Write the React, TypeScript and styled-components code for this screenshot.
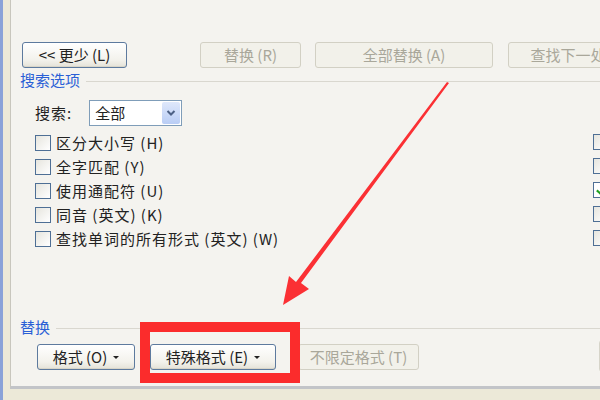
import React from "react";
import styled, { createGlobalStyle } from "styled-components";

const Global = createGlobalStyle`
  html, body { margin: 0; padding: 0; width: 600px; height: 400px; overflow: hidden; background: #ece9d8; }
  * { box-sizing: border-box; }
`;

const Frame = styled.div`
  position: relative;
  width: 600px;
  height: 400px;
  display: flex;
  flex-direction: column;
  font-family: "Noto Sans CJK SC", "Noto Sans", sans-serif;
  font-size: 15px;
  line-height: 18px;
  color: #222;
  background: #ece9d8;
  border-left: 3px solid #8aa2d8;
  overflow: hidden;
`;

const Panel = styled.div`
  margin-left: 7px;
  height: 389px;
  background: #f4f3ef;
  border-left: 1px solid #c8c6bd;
  border-bottom: 3px solid #c2c4c8;
  padding: 42px 0 0 9px;
  display: flex;
  flex-direction: column;
  overflow: hidden;
`;

const Row = styled.div<{ $indent?: number; $top?: number }>`
  display: flex;
  align-items: center;
  padding-left: ${(p) => p.$indent ?? 0}px;
  margin-top: ${(p) => p.$top ?? 0}px;
`;

const Button = styled.div<{ $w: number; $ml?: number; $disabled?: boolean }>`
  width: ${(p) => p.$w}px;
  margin-left: ${(p) => p.$ml ?? 0}px;
  height: 26px;
  flex: none;
  display: flex;
  align-items: center;
  justify-content: center;
  gap: 6px;
  border-radius: 3px;
  font-size: 15px;
  white-space: nowrap;
  overflow: hidden;
  border: 1px solid ${(p) => (p.$disabled ? "#d2d0c4" : "#5d7a9e")};
  color: ${(p) => (p.$disabled ? "#a9a79a" : "#222")};
  background: ${(p) =>
    p.$disabled ? "#f2f1ea" : "linear-gradient(#ffffff, #f3f2ec 70%, #e4e2d8)"};
  box-shadow: ${(p) => (p.$disabled ? "none" : "inset 0 -1px 0 #d8d5c8")};
`;

const Caret = styled.span`
  width: 0;
  height: 0;
  border-left: 3px solid transparent;
  border-right: 3px solid transparent;
  border-top: 3px solid #222;
  margin-top: 1px;
`;

const GroupTitle = styled.div<{ $top: number }>`
  display: flex;
  align-items: center;
  gap: 6px;
  margin-top: ${(p) => p.$top}px;
  color: #2a5fd6;
  font-size: 15px;
  &::after {
    content: "";
    flex: 1;
    height: 1px;
    background: #d9d7cf;
    margin-top: 3px;
  }
`;

const Label = styled.span`
  font-size: 15px;
  letter-spacing: 1px;
  margin-right: 17px;
`;

const Select = styled.div`
  width: 93px;
  height: 26px;
  border: 1px solid #7f9db9;
  background: #fff;
  display: flex;
  align-items: center;
  padding-left: 5px;
  justify-content: space-between;
`;

const SelectArrow = styled.div`
  width: 18px;
  height: 22px;
  margin-right: 1px;
  border-radius: 2px;
  background: linear-gradient(#dfe8fb, #b9cdf5);
  display: flex;
  align-items: center;
  justify-content: center;
`;

const Checks = styled.div`
  display: flex;
  flex-direction: column;
  gap: 8px;
  margin-top: 9px;
  padding-left: 15px;
`;

const CheckRow = styled.div`
  display: flex;
  align-items: center;
  gap: 5px;
  height: 16px;
  white-space: nowrap;
  letter-spacing: 1px;
`;

const Box = styled.div`
  width: 16px;
  height: 16px;
  border: 1px solid #4e6f95;
  background: linear-gradient(135deg, #e6e5de, #ffffff);
  flex: none;
`;

const RightChecks = styled.div`
  position: absolute;
  left: 590px;
  top: 134px;
  display: flex;
  flex-direction: column;
  gap: 8px;
`;

const GreenTick = styled.div`
  width: 16px;
  height: 16px;
  border: 1px solid #4e6f95;
  background: #fff;
  position: relative;
  &::after {
    content: "";
    position: absolute;
    left: 4px;
    top: 3px;
    width: 4px;
    height: 6px;
    border-right: 2px solid #21a121;
    border-bottom: 2px solid #21a121;
    transform: rotate(40deg);
  }
`;

const RedBox = styled.div`
  position: absolute;
  left: 137px;
  top: 322px;
  width: 160px;
  height: 61px;
  border: 10px solid #fb2c2c;
`;

const Overlay = styled.svg`
  position: absolute;
  left: 0;
  top: 0;
  pointer-events: none;
`;

const EdgeButton = styled.div`
  position: absolute;
  left: 596px;
  top: 340px;
  width: 10px;
  height: 32px;
  border: 1px solid #d6d4c9;
  border-radius: 3px;
  background: #fbfaf6;
`;

const options = [
  "区分大小写 (H)",
  "全字匹配 (Y)",
  "使用通配符 (U)",
  "同音 (英文) (K)",
  "查找单词的所有形式 (英文) (W)",
];

export default function App() {
  return (
    <Frame>
      <Global />
      <Panel>
        <Row $indent={2}>
          <Button $w={105}>&lt;&lt; 更少 (L)</Button>
          <Button $w={101} $ml={73} $disabled>替换 (R)</Button>
          <Button $w={178} $ml={14} $disabled>全部替换 (A)</Button>
          <Button $w={120} $ml={15} $disabled>查找下一处</Button>
        </Row>
        <GroupTitle $top={3}>搜索选项</GroupTitle>
        <Row $indent={15} $top={11}>
          <Label>搜索:</Label>
          <Select>
            全部
            <SelectArrow>
              <svg width="10" height="8" viewBox="0 0 10 8">
                <path d="M1.5 2 L5 5.5 L8.5 2" fill="none" stroke="#4d6185" strokeWidth="2" />
              </svg>
            </SelectArrow>
          </Select>
        </Row>
        <Checks>
          {options.map((o) => (
            <CheckRow key={o}>
              <Box />
              <span>{o}</span>
            </CheckRow>
          ))}
        </Checks>
        <GroupTitle $top={71}>替换</GroupTitle>
        <Row $indent={17} $top={8}>
          <Button $w={98}>格式 (O) <Caret /></Button>
          <Button $w={126} $ml={15}>特殊格式 (E)<Caret /></Button>
          <Button $w={121} $ml={22} $disabled>不限定格式 (T)</Button>
        </Row>
      </Panel>
      <RightChecks>
        <Box />
        <Box />
        <GreenTick />
        <Box />
        <Box />
      </RightChecks>
      <EdgeButton />
      <RedBox />
      <Overlay width="600" height="400" viewBox="0 0 600 400">
        <path d="M446 83 L298 283 L306 289 L280 305 L286 276 L293 282 L444 82 Z" fill="#fb3034" />
      </Overlay>
    </Frame>
  );
}
